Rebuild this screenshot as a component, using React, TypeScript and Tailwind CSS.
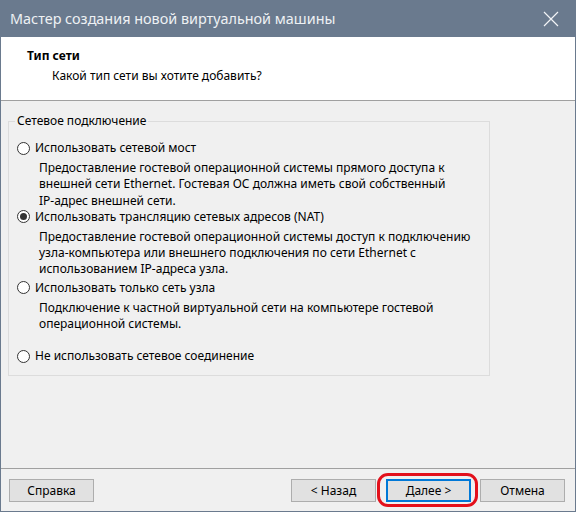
import React from "react";

function Radio({ checked }: { checked?: boolean }) {
  return (
    <span className="flex h-[13px] w-[13px] shrink-0 items-center justify-center rounded-full border border-[#333333] bg-white">
      {checked && <span className="h-[7px] w-[7px] rounded-full bg-[#333333]" />}
    </span>
  );
}

function Option({
  label,
  checked,
  desc,
  className,
}: {
  label: string;
  checked?: boolean;
  desc?: string[];
  className?: string;
}) {
  return (
    <div className={className}>
      <div className="flex h-[16px] items-center">
        <div className="ml-[8px] mr-[5px]">
          <Radio checked={checked} />
        </div>
        <span className="leading-[16px]">{label}</span>
      </div>
      {desc && (
        <div className="mt-[4px] pl-[30px] leading-[16px]">
          {desc.map((d, i) => (
            <div key={i} className="h-[16.3px]">
              {d}
            </div>
          ))}
        </div>
      )}
    </div>
  );
}

function Btn({ children, primary }: { children: React.ReactNode; primary?: boolean }) {
  return (
    <button
      className={
        "relative flex h-[23px] w-[85px] items-center justify-center bg-[#e1e1e1] text-[12px] text-black " +
        (primary ? "border-2 border-[#0078d7]" : "border border-[#adadad]")
      }
    >
      {children}
      {primary && (
        <span className="pointer-events-none absolute -bottom-[7px] -left-[11px] -right-[9px] -top-[8px] rounded-[11px] border-[3px] border-[#e3101b]" />
      )}
    </button>
  );
}

export default function App() {
  return (
    <div
      className="flex h-[512px] w-[576px] flex-col border-x border-b border-[#6a7a8e] bg-[#f0f0f0] text-[12px] text-black"
      style={{ fontFamily: '"Noto Sans", "Open Sans", sans-serif' }}
    >
      <div className="flex h-[37px] shrink-0 items-center justify-between bg-[#6a7a8e] pl-[9px] pr-[14px]">
        <span className="text-[14.4px] text-[#eef1f4]">Мастер создания новой виртуальной машины</span>
        <svg width="16" height="16" viewBox="0 0 16 16" className="mr-[2px]">
          <path d="M1 1 L15 15 M15 1 L1 15" stroke="#f2f4f7" strokeWidth="1.2" fill="none" />
        </svg>
      </div>
      <div className="h-[64px] shrink-0 border-b border-[#a0a0a0] bg-white pt-[10px]">
        <div className="pl-[26px] font-bold leading-[18px]">Тип сети</div>
        <div className="mt-[2px] pl-[51px] leading-[18px]">Какой тип сети вы хотите добавить?</div>
      </div>
      <div className="flex-1">
        <div className="ml-[7px] mt-[12px] flex h-[263px] w-[482px] flex-col">
          <div className="flex h-[16px] items-center">
            <div className="h-px w-[7px] bg-[#dcdcdc]" />
            <span className="px-[2px] leading-[16px]">Сетевое подключение</span>
            <div className="h-px flex-1 bg-[#dcdcdc]" />
          </div>
          <div className="-mt-[8px] flex-1 border-x border-b border-[#dcdcdc] pt-[8px]">
            <Option
              className="mt-[11px]"
              label="Использовать сетевой мост"
              desc={[
                "Предоставление гостевой операционной системы прямого доступа к",
                "внешней сети Ethernet. Гостевая ОС должна иметь свой собственный",
                "IP-адрес внешней сети.",
              ]}
            />
            <Option
              checked
              label="Использовать трансляцию сетевых адресов (NAT)"
              desc={[
                "Предоставление гостевой операционной системы доступ к подключению",
                "узла-компьютера или внешнего подключения по сети Ethernet с",
                "использованием IP-адреса узла.",
              ]}
            />
            <Option
              className="mt-[2px]"
              label="Использовать только сеть узла"
              desc={[
                "Подключение к частной виртуальной сети на компьютере гостевой",
                "операционной системы.",
              ]}
            />
            <Option className="mt-[16px]" label="Не использовать сетевое соединение" />
          </div>
        </div>
      </div>
      <div className="flex h-[43px] shrink-0 items-start border-t border-[#a0a0a0] pt-[10px]">
        <div className="ml-[8px]">
          <Btn>Справка</Btn>
        </div>
        <div className="ml-auto flex">
          <Btn>&lt; Назад</Btn>
          <div className="ml-[10px]">
            <Btn primary>Далее &gt;</Btn>
          </div>
          <div className="ml-[9px] mr-[10px]">
            <Btn>Отмена</Btn>
          </div>
        </div>
      </div>
    </div>
  );
}
